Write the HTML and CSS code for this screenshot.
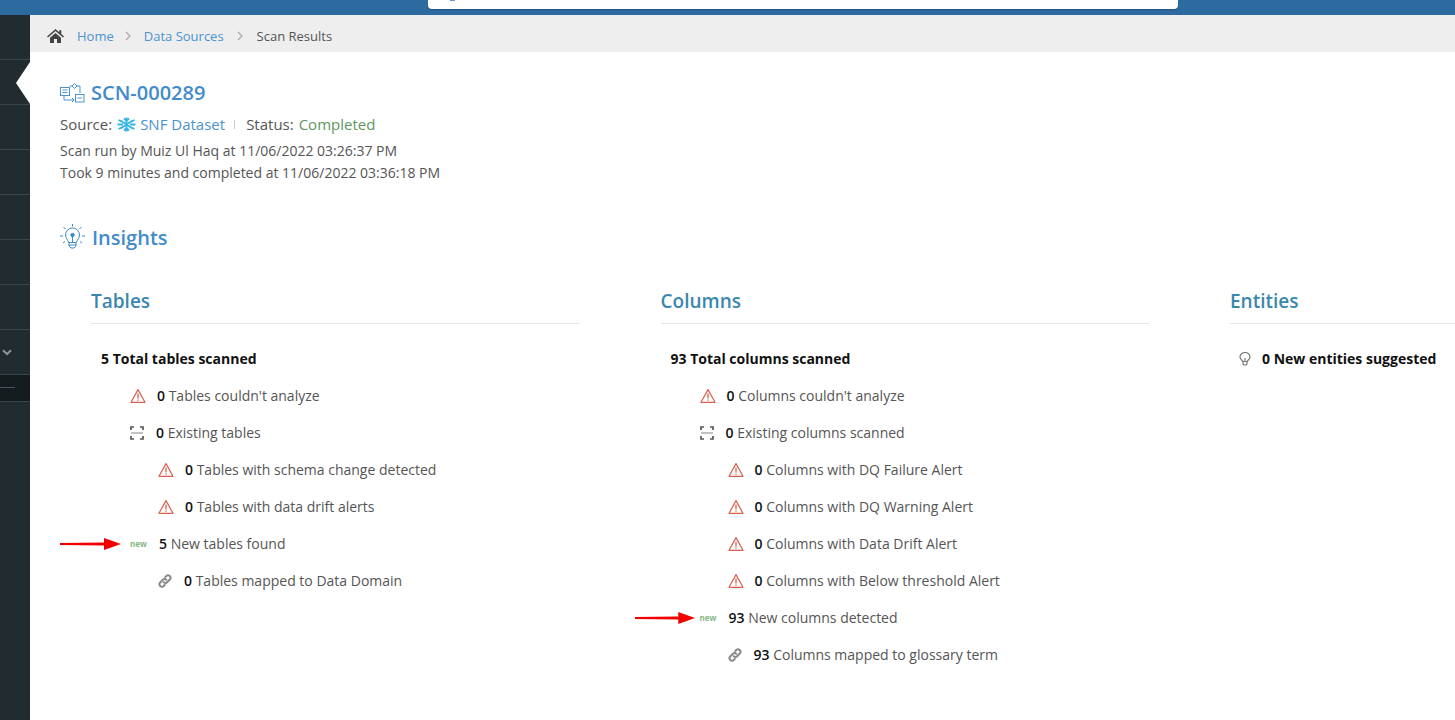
FILE: index.html
```html
<!DOCTYPE html>
<html lang="en">
<head>
<meta charset="utf-8">
<title>Scan Results</title>
<link rel="stylesheet" href="styles.css">
</head>
<body>
<svg class="defs" width="0" height="0" aria-hidden="true">
  <defs>
    <symbol id="warn" viewBox="0 0 16 16">
      <path d="M8 1.600 15 14.300H1Z" fill="none" stroke="#d9604f" stroke-width="1.200" stroke-linejoin="round"/>
      <path d="M8 5.600V10.400M8 11.400V12.800" fill="none" stroke="#d9604f" stroke-width="1.300"/>
    </symbol>
    <symbol id="scan" viewBox="0 0 14 14">
      <path d="M1 4V1H4M10 1H13V4M1 10V13H4M10 13H13V10" fill="none" stroke="#555" stroke-width="1.700"/>
      <path d="M1 7H13" stroke="#999" stroke-width="1.200"/>
    </symbol>
    <symbol id="link" viewBox="0 0 14 14">
      <path d="M5.800 8.200a2.300 2.300 0 0 0 3.300 0l2.900-2.900a2.500 2.500 0 0 0-3.500-3.500L7.200 3.100M8.200 5.800a2.300 2.300 0 0 0-3.300 0L2 8.700a2.500 2.500 0 0 0 3.500 3.500l1.300-1.300" fill="none" stroke="#8a8a8a" stroke-width="2" stroke-linecap="round"/>
    </symbol>
    <symbol id="arrow" viewBox="0 0 61 12">
      <path d="M0 5 44 4.400V0L61 6 44 12V7.600L0 7Z" fill="#f00000"/>
    </symbol>
  </defs>
</svg>

<header class="topbar"><div class="search"><span class="search-mark"></span></div></header>

<div class="shell">
  <aside class="sidebar">
    <div class="side-item"></div>
    <div class="side-item side-active"></div>
    <div class="side-item"></div>
    <div class="side-item"></div>
    <div class="side-item"></div>
    <div class="side-item"></div>
    <div class="side-item"></div>
    <div class="side-item side-chevron">
      <svg width="10" height="7" viewBox="0 0 10 7"><path d="M1 1.200 5 5 9 1.200" fill="none" stroke="#8b9599" stroke-width="2"/></svg>
    </div>
    <div class="side-sub"><span></span></div>
  </aside>

  <main class="main">
    <nav class="crumbs">
      <svg class="home" width="17" height="14" viewBox="0 0 17 14"><path d="M8.500 0 12.200 3.300V1.200H14.300V5.100L17 7.500 16 8.600 8.500 2 1 8.600 0 7.500ZM3 8.700 8.500 3.900 14 8.700V14H10V10H7V14H3Z" fill="#444"/></svg>
      <a class="crumb-link">Home</a>
      <svg class="sep" width="6" height="10" viewBox="0 0 6 10"><path d="M1 1 5 5 1 9" fill="none" stroke="#aaa" stroke-width="1.200"/></svg>
      <a class="crumb-link">Data Sources</a>
      <svg class="sep sep-wide" width="6" height="10" viewBox="0 0 6 10"><path d="M1 1 5 5 1 9" fill="none" stroke="#aaa" stroke-width="1.200"/></svg>
      <span class="crumb-current">Scan Results</span>
    </nav>

    <section class="content">
      <div class="scan-title">
        <svg width="25" height="20" viewBox="0 0 25 20" fill="none" stroke="#4b93cf" stroke-width="1">
          <rect x=".5" y="4.500" width="9" height="8"/><path d="M2.500 7H7.500M2.500 9.500H7.500"/>
          <path d="M9.500 3H12.500M4 12.500V17H14M12 15 14 17 12 19" />
          <path d="M14.500.5 17 3 14.500 5.500 12 3Z"/>
          <path d="M17 3H20V10"/>
          <rect x="15.500" y="11.500" width="8.500" height="7.500"/><path d="M17.500 15H22"/>
        </svg>
        <h1>SCN-000289</h1>
      </div>
      <div class="source-line">
        <span class="source-label">Source:</span>
        <svg class="snow" width="19" height="15" viewBox="0 0 19 15" fill="none" stroke="#35b4e6" stroke-width="1.800">
          <path d="M9.500 .5V14.500M3.500 3.500 15.500 11.500M15.500 3.500 3.500 11.500M.5 7.500H6M13 7.500H18.500M1.500 3 5.500 5M1.500 12 5.500 10M17.500 3 13.500 5M17.500 12 13.500 10M7 1.500 9.500 4 12 1.500M7 13.500 9.500 11 12 13.500"/>
        </svg>
        <a class="dataset">SNF Dataset</a>
        <i class="divider"></i>
        <span>Status:</span>
        <span class="completed">Completed</span>
      </div>
      <p class="meta">Scan run by Muiz Ul Haq at 11/06/2022 03:26:37 PM</p>
      <p class="meta">Took 9 minutes and completed at 11/06/2022 03:36:18 PM</p>

      <div class="insights-title">
        <svg width="25" height="26" viewBox="0 0 25 26" fill="none" stroke="#3d8cc4" stroke-width="1">
          <path d="M8.500 18.500C8 15.500 5.500 14.500 5.500 11A7 7 0 0 1 19.500 11C19.500 14.500 17 15.500 16.500 18.500Z"/>
          <path d="M9 18.500V22L11 24H14L16 22V18.500M9 21H16"/>
          <path d="M12.500 18V12.500"/><circle cx="12.500" cy="11" r="1.700" fill="#3d8cc4"/>
          <path d="M12.500 0V2.500M3.500 3 5.500 5M21.500 3 19.500 5M0 12H3M22 12H25M3 19 5 17.500M22 19 20 17.500"/>
        </svg>
        <h2>Insights</h2>
      </div>

      <div class="columns">
        <div class="col">
          <h3>Tables</h3>
          <ul class="stats">
            <li class="row total"><b>5</b> Total tables scanned</li>
            <li class="row lvl1"><svg class="ico"><use href="#warn"/></svg><b>0</b> Tables couldn't analyze</li>
            <li class="row lvl1"><svg class="ico ico-s"><use href="#scan"/></svg><b>0</b> Existing tables</li>
            <li class="row lvl2"><svg class="ico"><use href="#warn"/></svg><b>0</b> Tables with schema change detected</li>
            <li class="row lvl2"><svg class="ico"><use href="#warn"/></svg><b>0</b> Tables with data drift alerts</li>
            <li class="row lvl1"><svg class="arrow"><use href="#arrow"/></svg><em class="new">new</em><b>5</b> New tables found</li>
            <li class="row lvl2"><svg class="ico ico-s"><use href="#link"/></svg><b>0</b> Tables mapped to Data Domain</li>
          </ul>
        </div>
        <div class="col">
          <h3>Columns</h3>
          <ul class="stats">
            <li class="row total"><b>93</b> Total columns scanned</li>
            <li class="row lvl1"><svg class="ico"><use href="#warn"/></svg><b>0</b> Columns couldn't analyze</li>
            <li class="row lvl1"><svg class="ico ico-s"><use href="#scan"/></svg><b>0</b> Existing columns scanned</li>
            <li class="row lvl2"><svg class="ico"><use href="#warn"/></svg><b>0</b> Columns with DQ Failure Alert</li>
            <li class="row lvl2"><svg class="ico"><use href="#warn"/></svg><b>0</b> Columns with DQ Warning Alert</li>
            <li class="row lvl2"><svg class="ico"><use href="#warn"/></svg><b>0</b> Columns with Data Drift Alert</li>
            <li class="row lvl2"><svg class="ico"><use href="#warn"/></svg><b>0</b> Columns with Below threshold Alert</li>
            <li class="row lvl1"><svg class="arrow arrow-near"><use href="#arrow"/></svg><em class="new">new</em><b>93</b> New columns detected</li>
            <li class="row lvl2"><svg class="ico ico-s"><use href="#link"/></svg><b>93</b> Columns mapped to glossary term</li>
          </ul>
        </div>
        <div class="col">
          <h3>Entities</h3>
          <ul class="stats">
            <li class="row entity">
              <svg class="bulb" width="12" height="14" viewBox="0 0 12 14" fill="none" stroke="#777" stroke-width="1.200"><path d="M3.800 9.500C3.500 8 1 7.500 1 5A5 4.500 0 0 1 11 5C11 7.500 8.500 8 8.200 9.500Z"/><path d="M4 9.500V12L5 13H7L8 12V9.500M6 9V6"/></svg>
              <b>0 New entities suggested</b>
            </li>
          </ul>
        </div>
      </div>
    </section>
  </main>
</div>
</body>
</html>
```
FILE: styles.css
```css
* { box-sizing: border-box; }
html, body { margin: 0; height: 720px; overflow: hidden; background: #fff; }
body { font-family: "Open Sans", sans-serif; font-size: 14px; color: #555; }
.defs { position: absolute; }

.topbar { height: 15px; background: #2c6aa0; padding-left: 428px; }
.search { width: 750px; height: 9px; background: #fff; border-radius: 0 0 4px 4px; box-shadow: 0 1px 1px rgba(0,0,0,.2); padding-left: 22px; }
.search-mark { display: block; width: 5px; height: 1px; background: #5a9bd5; }

.shell { display: flex; height: 705px; }
.sidebar { width: 30px; flex: none; background: #212b30; }
.side-item { height: 45px; border-bottom: 1px solid #3a464c; position: relative; }
.side-active::after {
  content: ""; position: absolute; right: 0; top: 2px;
  border-style: solid; border-width: 21px 14px 21px 0;
  border-color: transparent #fff transparent transparent;
}
.side-chevron { display: flex; align-items: center; padding-left: 2px; }
.side-sub { height: 27px; background: #151c20; border-bottom: 1px solid #3a464c; padding-top: 12px; }
.side-sub span { display: block; width: 15px; height: 1px; background: #4a5459; }

.main { flex: 1; min-width: 0; overflow: hidden; }
.crumbs { height: 37px; background: #eee; display: flex; align-items: center; padding: 4px 0 0 17px; font-size: 13px; }
.home { margin-right: 13px; }
.crumb-link { color: #4b93cf; }
.sep { margin: 0 13px 0 11px; }
.sep-wide { margin: 0 14px 0 13px; }
.crumb-current { color: #555; }

.content { padding: 27px 0 0 30px; }
.scan-title { display: flex; align-items: center; gap: 6px; height: 28px; }
.scan-title h1 { margin: 0; font-size: 20px; font-weight: 600; color: #428bca; line-height: 28px; }
.source-line { display: flex; align-items: center; height: 20px; margin-top: 7px; font-size: 15px; }
.source-label { margin-right: 5px; }
.snow { margin-right: 4px; }
.dataset { color: #4b93cf; }
.divider { width: 1px; height: 9px; background: #ccc; margin: 0 11px 0 9px; }
.completed { color: #5f965f; margin-left: 5px; }
.meta { margin: 0; line-height: 22px; height: 22px; }
.source-line + .meta { margin-top: 6px; }

.insights-title { display: flex; align-items: center; gap: 7px; margin-top: 38px; height: 30px; }
.insights-title h2 { margin: 0; font-size: 20px; font-weight: 600; color: #428bca; }

.columns { display: grid; grid-template-columns: repeat(3, 488.5px); column-gap: 81px; margin: 34px 0 0 31px; }
.col h3 { margin: 0; height: 38px; font-size: 19px; line-height: 30px; font-weight: 600; color: #3a87ad; border-bottom: 1px solid #e5e5e5; }
.stats { list-style: none; margin: 0; padding: 0; }
.row { display: flex; align-items: center; height: 37px; white-space: pre; position: relative; }
.row b { color: #111; font-weight: 600; }
.total { padding-left: 10px; margin-top: 16px; color: #111; font-weight: 700; }
.total b { font-weight: 700; }
.lvl1 { padding-left: 39px; }
.lvl2 { padding-left: 67px; }
.ico { width: 16px; height: 16px; margin-right: 11px; flex: none; }
.ico-s { width: 14px; height: 14px; margin-right: 12px; }
.arrow { position: absolute; left: -31px; top: 13px; width: 61px; height: 12px; }
.arrow-near { left: -26px; width: 60px; }
.new { font-size: 8px; font-style: normal; font-weight: 700; color: #84b884; width: 29px; }
.entity { margin-top: 16px; padding-left: 9px; }
.entity b { font-weight: 700; }
.bulb { margin-right: 11px; }
```
